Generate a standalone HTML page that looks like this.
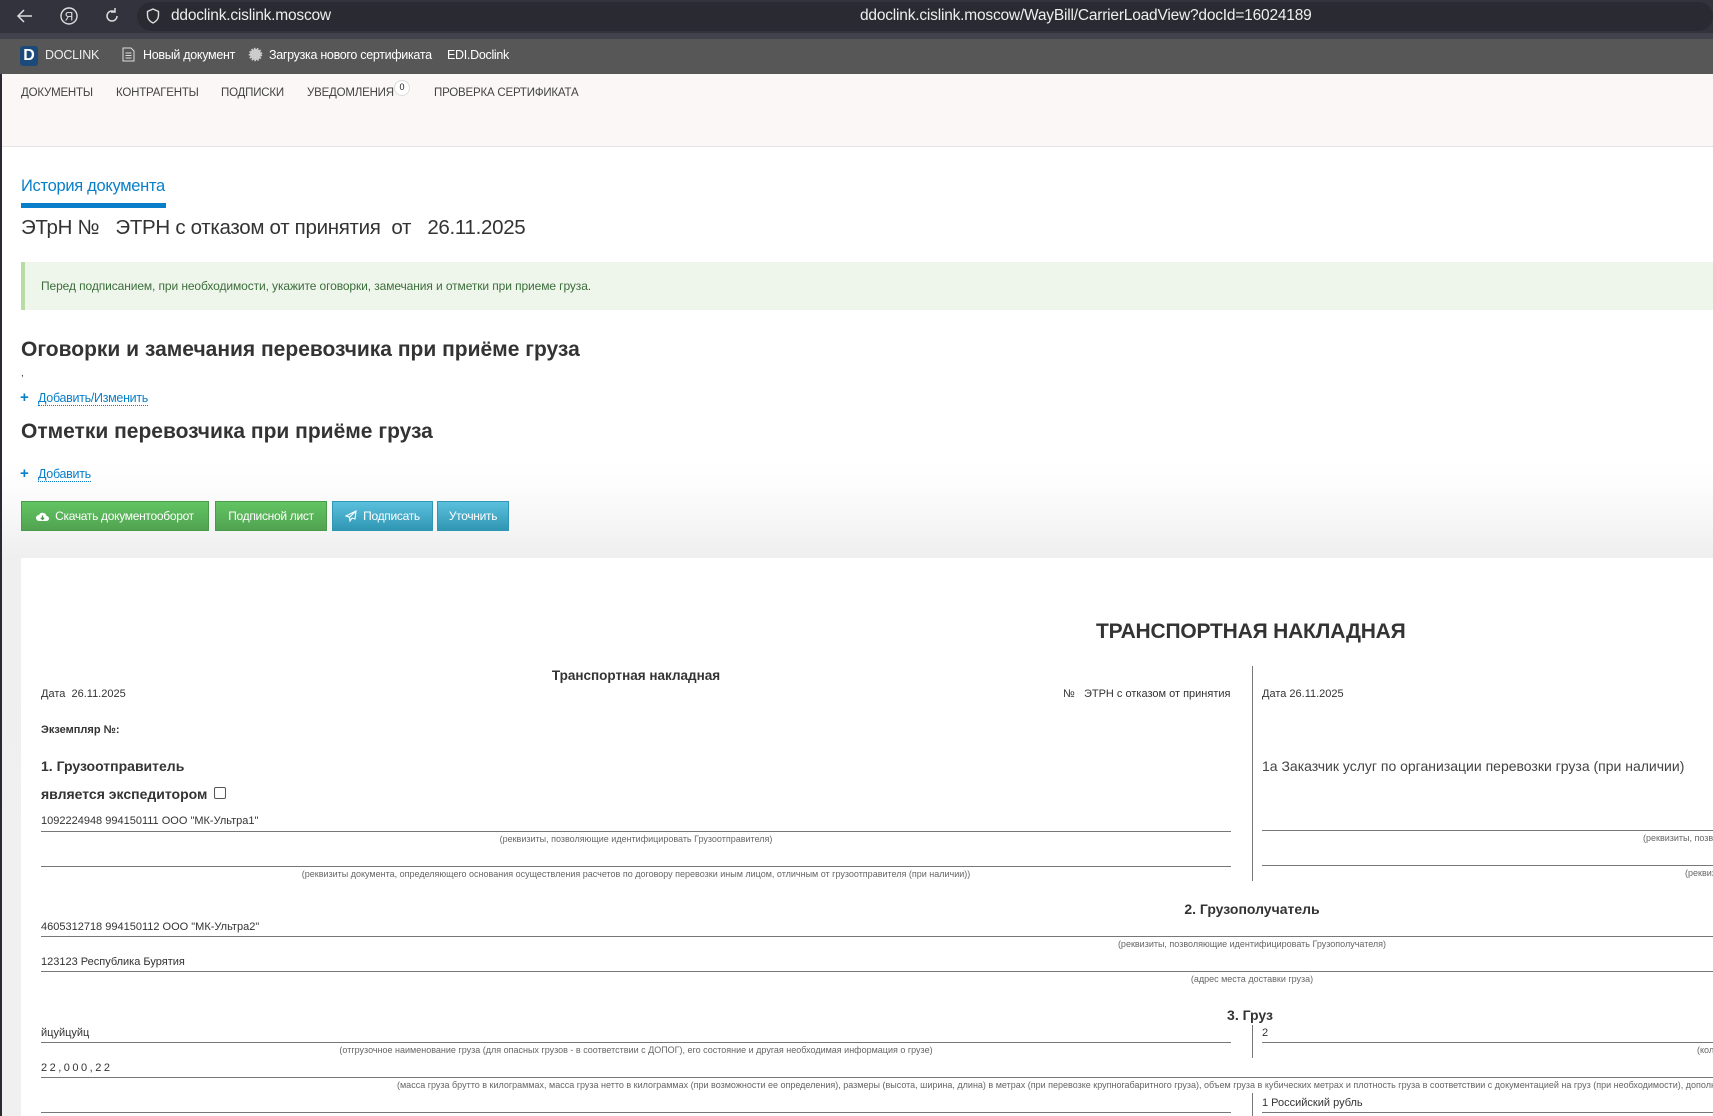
<!DOCTYPE html>
<html><head><meta charset="utf-8">
<style>
*{margin:0;padding:0;box-sizing:border-box}
body{width:1713px;height:1116px;overflow:hidden;position:relative;background:#fff;font-family:"Liberation Sans",Arial,sans-serif;color:#333}
.a{position:absolute;white-space:nowrap}
.ln{position:absolute;height:1px;background:#777}
.cap{position:absolute;font-size:9px;color:#666;white-space:nowrap;transform:translateX(-50%)}
.vl{position:absolute;width:1px;background:#777}
.btn{position:absolute;top:501px;height:30px;color:#fff;font-size:12px;line-height:29px;text-align:center;border-bottom:2px solid rgba(0,0,0,.25)}
.g{background:linear-gradient(#62c462,#51a351);border:1px solid #4a9a4a}
.b{background:linear-gradient(#5bc0de,#2f96b4);border:1px solid #2f96b4}
.d11{font-size:11px;color:#333}
.nv{position:absolute;top:87px;font-size:11.5px;color:#444;letter-spacing:-0.2px;white-space:nowrap}
</style></head><body>
<div class="a" style="left:0;top:0;width:1713px;height:33px;background:#33333d"></div>
<div class="a" style="left:0;top:33px;width:1713px;height:6px;background:#42424c"></div>
<div class="a" style="left:137px;top:2px;width:1576px;height:29px;background:#2a2a32;border-radius:15px"></div>
<svg class="a" style="left:16px;top:8px" width="18" height="16" viewBox="0 0 18 16"><path d="M16 8H3M8 2L2 8l6 6" stroke="#ddd" stroke-width="1.5" fill="none"/></svg>
<svg class="a" style="left:59px;top:6px" width="20" height="20" viewBox="0 0 20 20"><circle cx="10" cy="10" r="8" stroke="#ddd" stroke-width="1.4" fill="none"/><text x="10" y="14.5" text-anchor="middle" font-size="12" fill="#ddd" font-family="Liberation Sans">Я</text></svg>
<svg class="a" style="left:103px;top:7px" width="18" height="18" viewBox="0 0 18 18"><path d="M14 9a5 5 0 1 1-2-4M12 1v4h-4" stroke="#ddd" stroke-width="1.5" fill="none"/></svg>
<svg class="a" style="left:146px;top:8px" width="14" height="16" viewBox="0 0 14 16"><path d="M7 1L1.5 3.5v4c0 3.5 2.5 6 5.5 7.5 3-1.5 5.5-4 5.5-7.5v-4z" stroke="#ddd" stroke-width="1.4" fill="none"/></svg>
<div class="a" style="left:171px;top:7px;font-size:15.5px;color:#eee;letter-spacing:-0.2px">ddoclink.cislink.moscow</div>
<div class="a" style="left:860px;top:7px;font-size:15.5px;color:#eee;letter-spacing:-0.2px">ddoclink.cislink.moscow/WayBill/CarrierLoadView?docId=16024189</div>
<div class="a" style="left:0;top:39px;width:1713px;height:35px;background:#575757"></div>
<div class="a" style="left:20px;top:46px;width:18px;height:20px;background:#1b4a7a;border-radius:3px;color:#fff;font-weight:bold;font-size:16px;text-align:center;line-height:20px">D</div>
<div class="a" style="left:45px;top:48px;font-size:12.5px;color:#eee;letter-spacing:-0.2px">DOCLINK</div>
<svg class="a" style="left:122px;top:47px" width="13" height="15" viewBox="0 0 13 15"><path d="M1 1h8l3 3v10H1z M3.5 6h6M3.5 8.5h6M3.5 11h6" stroke="#ddd" stroke-width="1" fill="none"/></svg>
<div class="a" style="left:143px;top:48px;font-size:12.5px;color:#fff;letter-spacing:-0.3px">Новый документ</div>
<svg class="a" style="left:248px;top:47px" width="15" height="15" viewBox="0 0 15 15"><circle cx="7.5" cy="7.5" r="5.5" fill="#ccc" stroke="#ccc" stroke-width="2.5" stroke-dasharray="1.5 1.2"/></svg>
<div class="a" style="left:269px;top:48px;font-size:12.5px;color:#fff;letter-spacing:-0.3px">Загрузка нового сертификата</div>
<div class="a" style="left:447px;top:48px;font-size:12.5px;color:#fff;letter-spacing:-0.3px">EDI.Doclink</div>
<div class="a" style="left:0;top:74px;width:1713px;height:73px;background:#faf7f6;border-bottom:1px solid #e4e4e4"></div>
<div class="nv" style="left:21px">ДОКУМЕНТЫ</div>
<div class="nv" style="left:116px">КОНТРАГЕНТЫ</div>
<div class="nv" style="left:221px">ПОДПИСКИ</div>
<div class="nv" style="left:307px">УВЕДОМЛЕНИЯ</div>
<div class="a" style="left:394px;top:80px;width:16px;height:16px;border-radius:50%;background:#fff;border:1px solid #ddd;font-size:9px;text-align:center;line-height:13px;color:#222">0</div>
<div class="nv" style="left:434px">ПРОВЕРКА СЕРТИФИКАТА</div>
<div class="a" style="left:0;top:74px;width:2px;height:1042px;background:#2b2a33"></div>
<div class="a" style="left:21px;top:177px;font-size:16.5px;color:#0a7fc9;letter-spacing:-0.3px">История документа</div>
<div class="a" style="left:21px;top:203px;width:145px;height:5px;background:#0a7fc9"></div>
<div class="a" style="left:21px;top:216px;font-size:20.5px;color:#333;letter-spacing:-0.3px">ЭТрН №&nbsp;&nbsp; ЭТРН с отказом от принятия&nbsp; от&nbsp;&nbsp; 26.11.2025</div>
<div class="a" style="left:21px;top:262px;width:1692px;height:48px;background:#eef5ea;border-left:4px solid #b9dba6"></div>
<div class="a" style="left:41px;top:279px;font-size:12px;color:#3c6e3c;letter-spacing:-0.1px">Перед подписанием, при необходимости, укажите оговорки, замечания и отметки при приеме груза.</div>
<div class="a" style="left:21px;top:338px;font-size:21px;font-weight:bold;color:#333">Оговорки и замечания перевозчика при приёме груза</div>
<div class="a" style="left:21px;top:368px;font-size:10px">,</div>
<div class="a" style="left:20px;top:389px;font-size:15px;font-weight:bold;color:#0a7fc9">+</div>
<div class="a" style="left:38px;top:391px;font-size:12.5px;color:#0a7fc9;border-bottom:1px dotted #0a7fc9;letter-spacing:-0.3px">Добавить/Изменить</div>
<div class="a" style="left:21px;top:420px;font-size:21px;font-weight:bold;color:#333">Отметки перевозчика при приёме груза</div>
<div class="a" style="left:2px;top:462px;width:1711px;height:654px;background:linear-gradient(#fff 0,#fafafa 40px,#efefef 95px,#f0f0f0 100%)"></div>
<div class="a" style="left:20px;top:465px;font-size:15px;font-weight:bold;color:#0a7fc9">+</div>
<div class="a" style="left:38px;top:467px;font-size:12.5px;color:#0a7fc9;border-bottom:1px dotted #0a7fc9;letter-spacing:-0.3px">Добавить</div>
<div class="btn g" style="left:21px;width:188px;letter-spacing:-0.3px"><svg style="vertical-align:-2px;margin-right:6px" width="13" height="11" viewBox="0 0 13 11"><path d="M3 10a3 3 0 0 1 0-6 4 4 0 0 1 7.5 1A2.5 2.5 0 0 1 10.5 10z" fill="#fff"/><path d="M6.5 4.5v4M4.8 6.8l1.7 1.7 1.7-1.7" stroke="#4a9a4a" stroke-width="1.3" fill="none"/></svg>Скачать документооборот</div>
<div class="btn g" style="left:215px;width:112px;letter-spacing:-0.3px">Подписной лист</div>
<div class="btn b" style="left:332px;width:101px;letter-spacing:-0.3px"><svg style="vertical-align:-2px;margin-right:6px" width="12" height="12" viewBox="0 0 12 12"><path d="M11 1L1 6l3.5 1.2L5 11l2-3 3 1z M11 1L4.5 7.2" stroke="#fff" stroke-width="1.1" fill="none"/></svg>Подписать</div>
<div class="btn b" style="left:437px;width:72px;letter-spacing:-0.3px">Уточнить</div>
<div class="a" style="left:21px;top:558px;width:1692px;height:558px;background:#fff"></div>
<div class="a" style="left:1096px;top:620px;font-size:21px;font-weight:bold;color:#333;letter-spacing:-0.2px">ТРАНСПОРТНАЯ НАКЛАДНАЯ</div>
<div class="a" style="left:636px;top:668px;font-size:13.5px;font-weight:bold;transform:translateX(-50%)">Транспортная накладная</div>
<div class="a d11" style="left:41px;top:688px">Дата&nbsp; 26.11.2025</div>
<div class="a d11" style="left:1063px;top:688px">№&nbsp;&nbsp; ЭТРН с отказом от принятия</div>
<div class="a d11" style="left:1262px;top:688px">Дата 26.11.2025</div>
<div class="vl" style="left:1252px;top:666px;height:215px"></div>
<div class="a" style="left:41px;top:724px;font-size:11px;font-weight:bold">Экземпляр №:</div>
<div class="a" style="left:41px;top:758px;font-size:14px;font-weight:bold">1. Грузоотправитель</div>
<div class="a" style="left:41px;top:786px;font-size:14px;font-weight:bold">является экспедитором</div>
<div class="a" style="left:214px;top:787px;width:12px;height:12px;border:1px solid #555;border-radius:2px;background:#fff"></div>
<div class="a" style="left:1262px;top:758px;font-size:14px;color:#444">1а Заказчик услуг по организации перевозки груза (при наличии)</div>
<div class="a d11" style="left:41px;top:815px">1092224948 994150111 ООО "МК-Ультра1"</div>
<div class="ln" style="left:41px;top:831px;width:1190px"></div>
<div class="cap" style="left:636px;top:834px">(реквизиты, позволяющие идентифицировать Грузоотправителя)</div>
<div class="ln" style="left:41px;top:866px;width:1190px"></div>
<div class="cap" style="left:636px;top:869px">(реквизиты документа, определяющего основания осуществления расчетов по договору перевозки иным лицом, отличным от грузоотправителя (при наличии))</div>
<div class="ln" style="left:1262px;top:830px;width:451px"></div>
<div class="a" style="left:1643px;top:833px;font-size:9px;color:#666">(реквизиты, позв</div>
<div class="ln" style="left:1262px;top:865px;width:451px"></div>
<div class="a" style="left:1685px;top:868px;font-size:9px;color:#666">(реквиз</div>
<div class="a" style="left:1252px;top:901px;font-size:14px;font-weight:bold;transform:translateX(-50%)">2. Грузополучатель</div>
<div class="a d11" style="left:41px;top:921px">4605312718 994150112 ООО "МК-Ультра2"</div>
<div class="ln" style="left:41px;top:936px;width:1672px"></div>
<div class="cap" style="left:1252px;top:939px">(реквизиты, позволяющие идентифицировать Грузополучателя)</div>
<div class="a d11" style="left:41px;top:956px">123123 Республика Бурятия</div>
<div class="ln" style="left:41px;top:971px;width:1672px"></div>
<div class="cap" style="left:1252px;top:974px">(адрес места доставки груза)</div>
<div class="a" style="left:1250px;top:1007px;font-size:14px;font-weight:bold;transform:translateX(-50%)">3. Груз</div>
<div class="a d11" style="left:41px;top:1027px">йцуйцуйц</div>
<div class="ln" style="left:41px;top:1042px;width:1190px"></div>
<div class="cap" style="left:636px;top:1045px">(отгрузочное наименование груза (для опасных грузов - в соответствии с ДОПОГ), его состояние и другая необходимая информация о грузе)</div>
<div class="vl" style="left:1252px;top:1025px;height:33px"></div>
<div class="a d11" style="left:1262px;top:1027px">2</div>
<div class="ln" style="left:1262px;top:1042px;width:451px"></div>
<div class="a" style="left:1697px;top:1045px;font-size:9px;color:#666">(кол</div>
<div class="a d11" style="left:41px;top:1062px;letter-spacing:2.5px">22,000,22</div>
<div class="ln" style="left:41px;top:1077px;width:1672px"></div>
<div class="a" style="left:397px;top:1080px;font-size:9px;color:#666">(масса груза брутто в килограммах, масса груза нетто в килограммах (при возможности ее определения), размеры (высота, ширина, длина) в метрах (при перевозке крупногабаритного груза), объем груза в кубических метрах и плотность груза в соответствии с документацией на груз (при необходимости), дополнительные</div>
<div class="vl" style="left:1252px;top:1093px;height:23px"></div>
<div class="a d11" style="left:1262px;top:1097px">1 Российский рубль</div>
<div class="ln" style="left:41px;top:1112px;width:1190px"></div>
<div class="ln" style="left:1262px;top:1112px;width:451px"></div>
</body></html>
